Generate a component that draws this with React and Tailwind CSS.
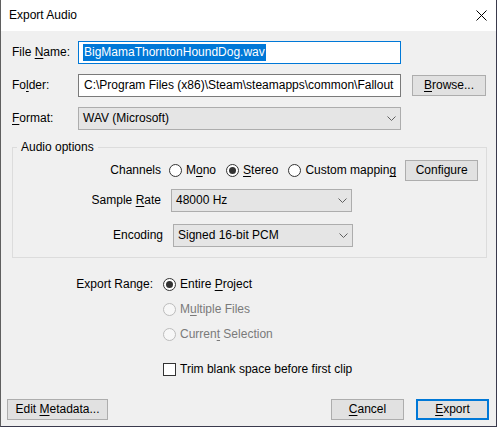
function Mn({ children }) {
  return <span className="underline underline-offset-[2px] decoration-1">{children}</span>
}

function Radio({ checked, disabled }) {
  return (
    <span
      className={`w-[13px] h-[13px] rounded-full border flex items-center justify-center shrink-0 ${
        disabled ? 'border-[#bcbcbc] bg-[#f7f7f7]' : 'border-[#333333] bg-white'
      }`}
    >
      {checked && <span className="w-[7px] h-[7px] rounded-full bg-[#333333]" />}
    </span>
  )
}

function RadioItem({ checked, disabled, children, className = '' }) {
  return (
    <div className={`flex items-center gap-[4px] ${disabled ? 'text-[#7a7a7a]' : ''} ${className}`}>
      <Radio checked={checked} disabled={disabled} />
      <span>{children}</span>
    </div>
  )
}

function Chevron() {
  return (
    <svg width="9" height="5" viewBox="0 0 9 5" className="shrink-0">
      <polyline points="0.5,0.5 4.5,4.5 8.5,0.5" fill="none" stroke="#606060" strokeWidth="1" />
    </svg>
  )
}

function Select({ value, className = '' }) {
  return (
    <div
      className={`h-[23px] bg-[#e5e5e5] border border-[#adadad] flex items-center justify-between pl-[4px] pr-[4px] ${className}`}
    >
      <span>{value}</span>
      <Chevron />
    </div>
  )
}

function Button({ children, primary, className = '' }) {
  return (
    <button
      className={`h-[21px] bg-[#e1e1e1] flex items-center justify-center ${
        primary ? 'border-2 border-[#0078d7]' : 'border border-[#adadad]'
      } ${className}`}
    >
      <span>{children}</span>
    </button>
  )
}

export default function App() {
  return (
    <div className="w-[497px] h-[427px] bg-[#f0f0f0] border-l border-l-[#5f5f5f] border-r border-r-[#3a3a4c] border-b border-b-[#3a3a4c] flex flex-col text-[12px] leading-[15px] text-black font-['Liberation_Sans',Arial,sans-serif]">
      {/* title bar */}
      <div className="h-[31px] bg-white flex items-center justify-between pl-[8px] pr-[9px] shrink-0">
        <span className="text-[12px]">Export Audio</span>
        <svg width="11" height="11" viewBox="0 0 11 11">
          <path d="M0.5 0.5 L10.5 10.5 M10.5 0.5 L0.5 10.5" stroke="#000" strokeWidth="1" />
        </svg>
      </div>

      <div className="flex-1 flex flex-col pl-[11px]">
        {/* file name */}
        <div className="mt-[10px] flex items-center h-[23px]">
          <span className="w-[66px]">
            File <Mn>N</Mn>ame:
          </span>
          <div className="w-[323px] h-[23px] bg-white border border-[#0078d7] flex items-center pl-[4px]">
            <span className="bg-[#0078d7] text-white h-[17px] flex items-center pl-[1px] pr-[1px]">
              BigMamaThorntonHoundDog.wav
            </span>
          </div>
        </div>

        {/* folder */}
        <div className="mt-[10px] flex items-start h-[23px]">
          <span className="w-[66px] h-[23px] flex items-center">
            <span>
              Fo<Mn>l</Mn>der:
            </span>
          </span>
          <div className="w-[323px] h-[23px] bg-white border border-[#7a7a7a] flex items-center pl-[5px] overflow-hidden whitespace-nowrap">
            C:\Program Files (x86)\Steam\steamapps\common\Fallout
          </div>
          <Button className="ml-[11px] mt-[1px] w-[74px]">
            <Mn>B</Mn>rowse...
          </Button>
        </div>

        {/* format */}
        <div className="mt-[10px] flex items-center h-[23px]">
          <span className="w-[66px]">
            <Mn>F</Mn>ormat:
          </span>
          <Select value="WAV (Microsoft)" className="w-[323px]" />
        </div>

        {/* audio options group */}
        <div className="relative mt-[17px] w-[475px] h-[111px] border border-[#dcdcdc]">
          <span className="absolute left-[4px] top-[-8px] bg-[#f0f0f0] px-[4px]">Audio options</span>

          <div className="mt-[12px] flex items-center h-[21px]">
            <span className="w-[148px] text-right">Channels</span>
            <RadioItem className="ml-[8px]">
              M<Mn>o</Mn>no
            </RadioItem>
            <RadioItem checked className="ml-[10px]">
              <Mn>S</Mn>tereo
            </RadioItem>
            <RadioItem className="ml-[10px]">
              Custom mappin<Mn>g</Mn>
            </RadioItem>
            <Button className="ml-[9px] w-[73px]">Configure</Button>
          </div>

          <div className="mt-[8px] flex items-center h-[23px]">
            <span className="w-[148px] text-right">
              Sample <Mn>R</Mn>ate
            </span>
            <Select value="48000 Hz" className="ml-[10px] w-[181px]" />
          </div>

          <div className="mt-[12px] flex items-center h-[23px]">
            <span className="w-[150px] text-right">Encoding</span>
            <Select value="Signed 16-bit PCM" className="ml-[10px] w-[180px]" />
          </div>
        </div>

        {/* export range */}
        <div className="mt-[16px] flex items-start">
          <span className="w-[141px] h-[20px] flex items-center justify-end">Export Range:</span>
          <div className="ml-[10px] flex flex-col gap-[5px]">
            <RadioItem checked className="h-[20px]">
              Entire <Mn>P</Mn>roject
            </RadioItem>
            <RadioItem disabled className="h-[20px]">
              M<Mn>u</Mn>ltiple Files
            </RadioItem>
            <RadioItem disabled className="h-[20px]">
              Curren<Mn>t</Mn> Selection
            </RadioItem>
          </div>
        </div>

        <div className="mt-[15px] ml-[151px] flex items-center gap-[4px] h-[20px]">
          <span className="w-[13px] h-[13px] border border-[#333333] bg-white shrink-0" />
          <span>Trim blank space before first clip</span>
        </div>

        {/* bottom buttons */}
        <div className="mt-auto mb-[6px] flex items-center pr-[7px]">
          <Button className="ml-[-5px] w-[101px]">
            Edit <Mn>M</Mn>etadata...
          </Button>
          <Button className="ml-auto w-[73px]">
            <Mn>C</Mn>ancel
          </Button>
          <Button primary className="ml-[12px] w-[73px]">
            <Mn>E</Mn>xport
          </Button>
        </div>
      </div>
    </div>
  )
}
